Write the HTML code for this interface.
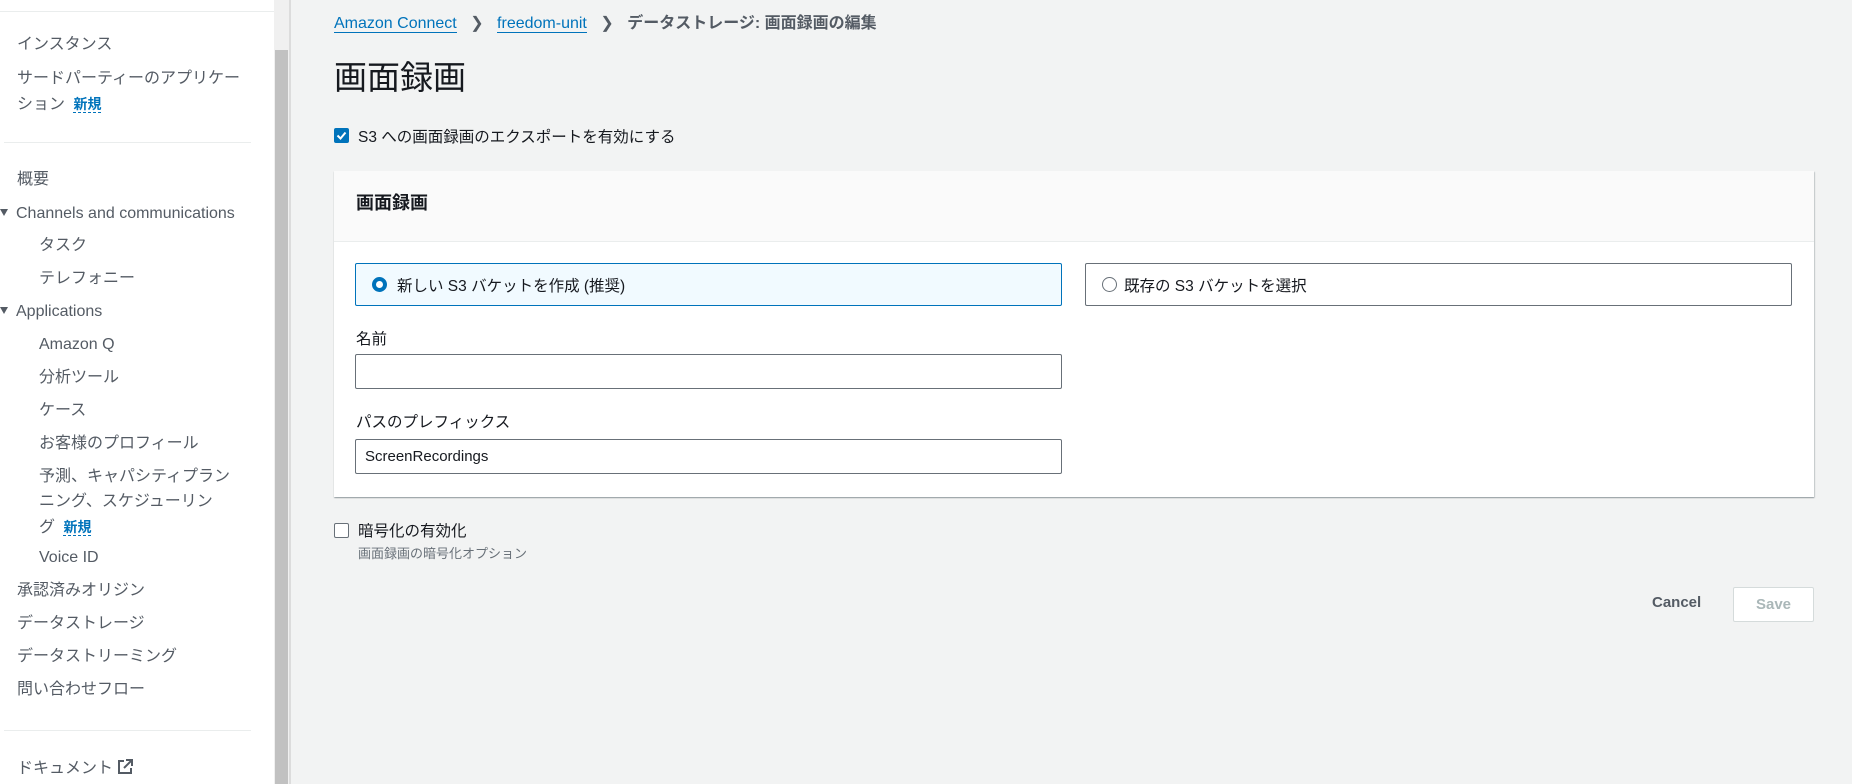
<!DOCTYPE html>
<html><head><meta charset="utf-8"><style>
*{margin:0;padding:0;box-sizing:border-box}
body{width:1852px;height:784px;overflow:hidden;background:#f2f3f3;font-family:"Liberation Sans","Noto Sans CJK JP",sans-serif;color:#16191f;position:relative}
.a{position:absolute;white-space:nowrap}
#side{position:absolute;left:0;top:0;width:274px;height:784px;background:#fff}
#sb{position:absolute;left:274px;top:0;width:15px;height:784px;background:#f0f0f0}
#thumb{position:absolute;left:275px;top:50px;width:13px;height:734px;background:#c1c1c1}
#bd{position:absolute;left:289px;top:0;width:2px;height:784px;background:#dcdcdc}
.s{font-size:16px;color:#545b64;line-height:20px}
.new{color:#0073bb;font-weight:bold;font-size:14px;border-bottom:1px dashed #0073bb}
.hr{position:absolute;height:1px;background:#eaeded}
.tri{display:inline-block;width:0;height:0;border-left:4px solid transparent;border-right:4px solid transparent;border-top:7px solid #545b64;margin-right:8px;vertical-align:2px}
.panel{position:absolute;left:334px;top:171px;width:1480px;height:326px;background:#fff;box-shadow:0 1px 1px rgba(0,28,36,.3),1px 1px 1px rgba(0,28,36,.15);}
.box{position:absolute;border:1px solid #687078;border-radius:2px;background:#fff}
.lab{font-size:15.5px;color:#16191f}
</style></head><body>
<div id="side">
<div class="hr" style="left:0;top:11px;width:274px"></div>
<div class="a s" style="left:17px;top:35px">インスタンス</div>
<div class="a s" style="left:17px;top:69px">サードパーティーのアプリケー</div>
<div class="a s" style="left:17px;top:94px">ション <span class="new" style="margin-left:4px">新規</span></div>
<div class="hr" style="left:4px;top:142px;width:247px"></div>
<div class="a s" style="left:17px;top:170px">概要</div>
<div class="a s" style="left:0;top:204px"><span class="tri"></span>Channels and communications</div>
<div class="a s" style="left:39px;top:236px">タスク</div>
<div class="a s" style="left:39px;top:269px">テレフォニー</div>
<div class="a s" style="left:0;top:302px"><span class="tri"></span>Applications</div>
<div class="a s" style="left:39px;top:335px">Amazon Q</div>
<div class="a s" style="left:39px;top:368px">分析ツール</div>
<div class="a s" style="left:39px;top:401px">ケース</div>
<div class="a s" style="left:39px;top:434px">お客様のプロフィール</div>
<div class="a s" style="left:39px;top:467px">予測、キャパシティプラン</div>
<div class="a s" style="left:39px;top:492px">ニング、スケジューリン</div>
<div class="a s" style="left:39px;top:517px">グ <span class="new" style="margin-left:4px">新規</span></div>
<div class="a s" style="left:39px;top:548px">Voice ID</div>
<div class="a s" style="left:17px;top:581px">承認済みオリジン</div>
<div class="a s" style="left:17px;top:614px">データストレージ</div>
<div class="a s" style="left:17px;top:647px">データストリーミング</div>
<div class="a s" style="left:17px;top:680px">問い合わせフロー</div>
<div class="hr" style="left:4px;top:730px;width:247px"></div>
<div class="a s" style="left:17px;top:759px">ドキュメント <svg width="16" height="16" viewBox="0 0 16 16" style="vertical-align:-2px"><path d="M7 2H2v12h12V9" fill="none" stroke="#545b64" stroke-width="2"/><path d="M9 1h6v6M15 1L7 9" fill="none" stroke="#545b64" stroke-width="2"/></svg></div>
</div>
<div id="sb"></div><div id="thumb"></div><div id="bd"></div>

<div class="a" style="left:334px;top:14px;font-size:16px;line-height:20px">
<span style="color:#0073bb;border-bottom:1px solid #0073bb">Amazon Connect</span>
<span style="color:#545b64;margin:0 9px">&#x276F;</span>
<span style="color:#0073bb;border-bottom:1px solid #0073bb">freedom-unit</span>
<span style="color:#545b64;margin:0 9px">&#x276F;</span>
<span style="color:#545b64;font-weight:bold">データストレージ: 画面録画の編集</span></div>
<div class="a" style="left:334px;top:58px;font-size:33px;line-height:40px">画面録画</div>
<div class="a" style="left:334px;top:128px;width:15px;height:15px;background:#0073bb;border-radius:2px"><svg width="15" height="15" viewBox="0 0 15 15"><path d="M3.5 7.5l3 3 5-6" fill="none" stroke="#fff" stroke-width="2"/></svg></div>
<div class="a lab" style="left:358px;top:125px;font-size:15.5px">S3 への画面録画のエクスポートを有効にする</div>

<div class="panel">
<div style="position:absolute;left:0;top:0;width:1480px;height:71px;background:#fafafa;border-bottom:1px solid #eaeded"></div>
<div class="a" style="left:22px;top:20px;font-size:18px;font-weight:bold;line-height:24px">画面録画</div>
<div class="box" style="left:21px;top:92px;width:707px;height:43px;border-color:#0073bb;background:#f1faff"><div class="a" style="left:16px;top:13px;width:15px;height:15px;border-radius:50%;border:4px solid #0073bb;background:#fff"></div><div class="a lab" style="left:41px;top:10px">新しい S3 バケットを作成 (推奨)</div></div>
<div class="box" style="left:751px;top:92px;width:707px;height:43px"><div class="a" style="left:16px;top:13px;width:15px;height:15px;border-radius:50%;border:1.5px solid #687078"></div><div class="a lab" style="left:38px;top:10px">既存の S3 バケットを選択</div></div>
<div class="a lab" style="left:22px;top:156px">名前</div>
<div class="box" style="left:21px;top:183px;width:707px;height:35px"></div>
<div class="a lab" style="left:22px;top:239px">パスのプレフィックス</div>
<div class="box" style="left:21px;top:268px;width:707px;height:35px"><div class="a" style="left:9px;top:8px;font-size:15px">ScreenRecordings</div></div>
</div>

<div class="a" style="left:334px;top:523px;width:15px;height:15px;border:1.5px solid #687078;border-radius:2px;background:#fff"></div>
<div class="a lab" style="left:358px;top:519px">暗号化の有効化</div>
<div class="a" style="left:358px;top:543px;font-size:13px;color:#687078">画面録画の暗号化オプション</div>

<div class="a" style="left:1652px;top:594px;font-size:15px;font-weight:bold;color:#545b64">Cancel</div>
<div class="a" style="left:1733px;top:587px;width:81px;height:35px;border:1px solid #d5dbdb;background:#fff;border-radius:2px;text-align:center;line-height:33px;font-size:15px;font-weight:bold;color:#aab7b8">Save</div>
</body></html>
